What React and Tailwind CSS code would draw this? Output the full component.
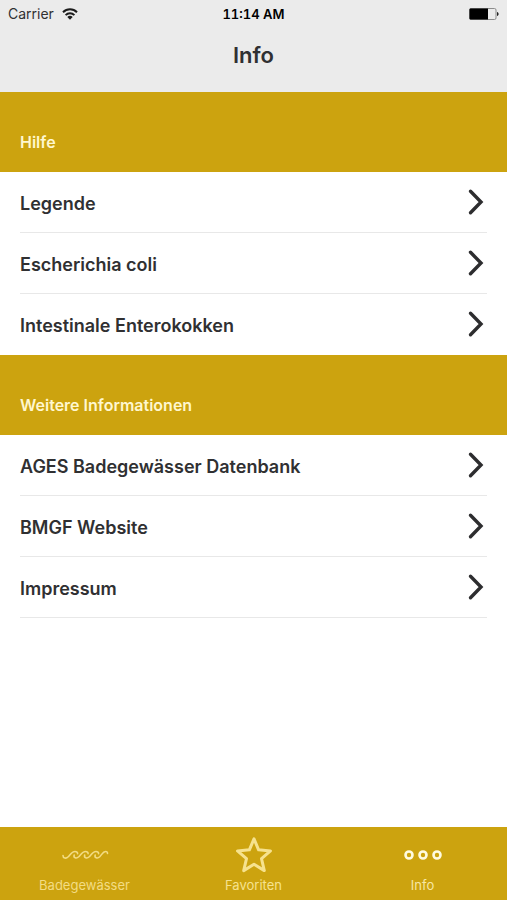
const sections = [
  { title: "Hilfe", rows: ["Legende", "Escherichia coli", "Intestinale Enterokokken"] },
  { title: "Weitere Informationen", rows: ["AGES Badegewässer Datenbank", "BMGF Website", "Impressum"] },
];

function WifiIcon() {
  return (
    <svg className="h-3 w-4" viewBox="0 0 16 12" fill="none" stroke="#1c1c1c" strokeWidth="2" aria-hidden="true">
      <path d="M1 4.200a10 10 0 0 1 14 0" />
      <path d="M3.600 7.100a6.300 6.300 0 0 1 8.800 0" />
      <path d="M8 11.800 5.300 9.100a3.800 3.800 0 0 1 5.400 0z" fill="#1c1c1c" stroke="none" />
    </svg>
  );
}

function BatteryIcon() {
  return (
    <svg className="h-3 w-[30px]" viewBox="0 0 30 12" aria-hidden="true">
      <rect x="0.5" y="0.5" width="26.5" height="11" rx="1.5" fill="none" stroke="#8c8c8c" />
      <path d="M1.500 0.500H19v11H1.500a1 1 0 0 1-1-1v-9a1 1 0 0 1 1-1z" fill="#000" />
      <path d="M28 4c1 .3 1.600 1 1.600 2S29 7.700 28 8z" fill="#222" />
    </svg>
  );
}

function Chevron() {
  return (
    <svg className="h-7 w-5 shrink-0" viewBox="0 0 20 28" fill="none" stroke="#2d2d2f" strokeWidth="3.400" strokeLinecap="round" strokeLinejoin="miter" aria-hidden="true">
      <path d="M3.500 3.300 14 14 3.500 24.700" />
    </svg>
  );
}

function WavesIcon() {
  return (
    <svg className="h-10 w-12" viewBox="0 0 48 40" fill="none" stroke="currentColor" strokeWidth="1.600" strokeLinecap="round" strokeLinejoin="round" aria-hidden="true">
      <path d="M2 20.500C2 23.300 5 24 7.200 21.800 9.500 19.300 11 16.500 14 16.500c1.700 0 2.700 1 2.600 2.300" />
      <path d="M13.200 20C12.200 23 15.500 24 17.700 21.800 20 19.300 21.500 16.500 24.500 16.500c1.700 0 2.700 1 2.600 2.300" />
      <path d="M23.700 20C22.700 23 26 24 28.200 21.800 30.500 19.300 32 16.500 35 16.500c1.700 0 2.700 1 2.600 2.300" />
      <path d="M34.200 20C33.200 23 36.500 24 38.700 21.800 41 19.300 42 16.500 44.600 16.500c1.300 0 2 .8 1.900 2" />
    </svg>
  );
}

function StarIcon() {
  return (
    <svg className="h-10 w-10" viewBox="0 0 40 40" fill="none" stroke="currentColor" strokeWidth="3" strokeLinejoin="round" aria-hidden="true">
      <path d="M20 3.800 24.600 14.800 36.500 15.900 27.500 23.700 30.300 35.600 20 29.300 9.700 35.600 12.500 23.700 3.500 15.900 15.400 14.800z" />
    </svg>
  );
}

function DotsIcon() {
  return (
    <svg className="h-10 w-10" viewBox="0 0 40 40" fill="none" stroke="#fffbe0" strokeWidth="2.600" aria-hidden="true">
      <circle cx="6" cy="20" r="3.500" />
      <circle cx="20" cy="20" r="3.500" />
      <circle cx="34" cy="20" r="3.500" />
    </svg>
  );
}

const tabs = [
  { label: "Badegewässer", Icon: WavesIcon, color: "text-[#f3dc83]" },
  { label: "Favoriten", Icon: StarIcon, color: "text-[#f6e28e]" },
  { label: "Info", Icon: DotsIcon, color: "text-[#f7e7a4]" },
];

export default function App() {
  return (
    <div className="flex min-h-screen flex-col bg-white font-['Inter',sans-serif] text-[#303032]">
      <header className="h-[92px] bg-[#ebebeb]">
        <div className="grid h-7 grid-cols-[1fr_auto_1fr] items-center px-2 text-sm">
          <div className="flex items-center gap-2">
            <span>Carrier</span>
            <WifiIcon />
          </div>
          <time className="text-center text-[13px] font-semibold text-black tabular-nums">11:14 AM</time>
          <div className="flex justify-end">
            <BatteryIcon />
          </div>
        </div>
        <h1 className="pt-3 text-center text-[22px] leading-[30px] font-semibold">Info</h1>
      </header>

      <main className="grow">
        {sections.map((section) => (
          <section key={section.title}>
            <h2 className="flex h-20 items-end bg-[#cca30f] px-5 pb-5 text-base leading-5 font-semibold text-[#fff7cf]">
              {section.title}
            </h2>
            <ul className="px-5">
              {section.rows.map((row) => (
                <li key={row} className="border-b border-[#e8e8e8] last:border-transparent [section:last-child>ul>&]:border-[#e8e8e8]">
                  <a href="#" className="flex h-[60px] items-center justify-between text-lg font-semibold">
                    <span className="pt-1">{row}</span>
                    <Chevron />
                  </a>
                </li>
              ))}
            </ul>
          </section>
        ))}
      </main>

      <nav className="grid h-[73px] grid-cols-3 bg-[#cca30f]">
        {tabs.map(({ label, Icon, color }) => (
          <button key={label} type="button" className={`flex flex-col items-center pt-2 text-[13px] leading-5 ${color}`}>
            <Icon />
            <span>{label}</span>
          </button>
        ))}
      </nav>
    </div>
  );
}
